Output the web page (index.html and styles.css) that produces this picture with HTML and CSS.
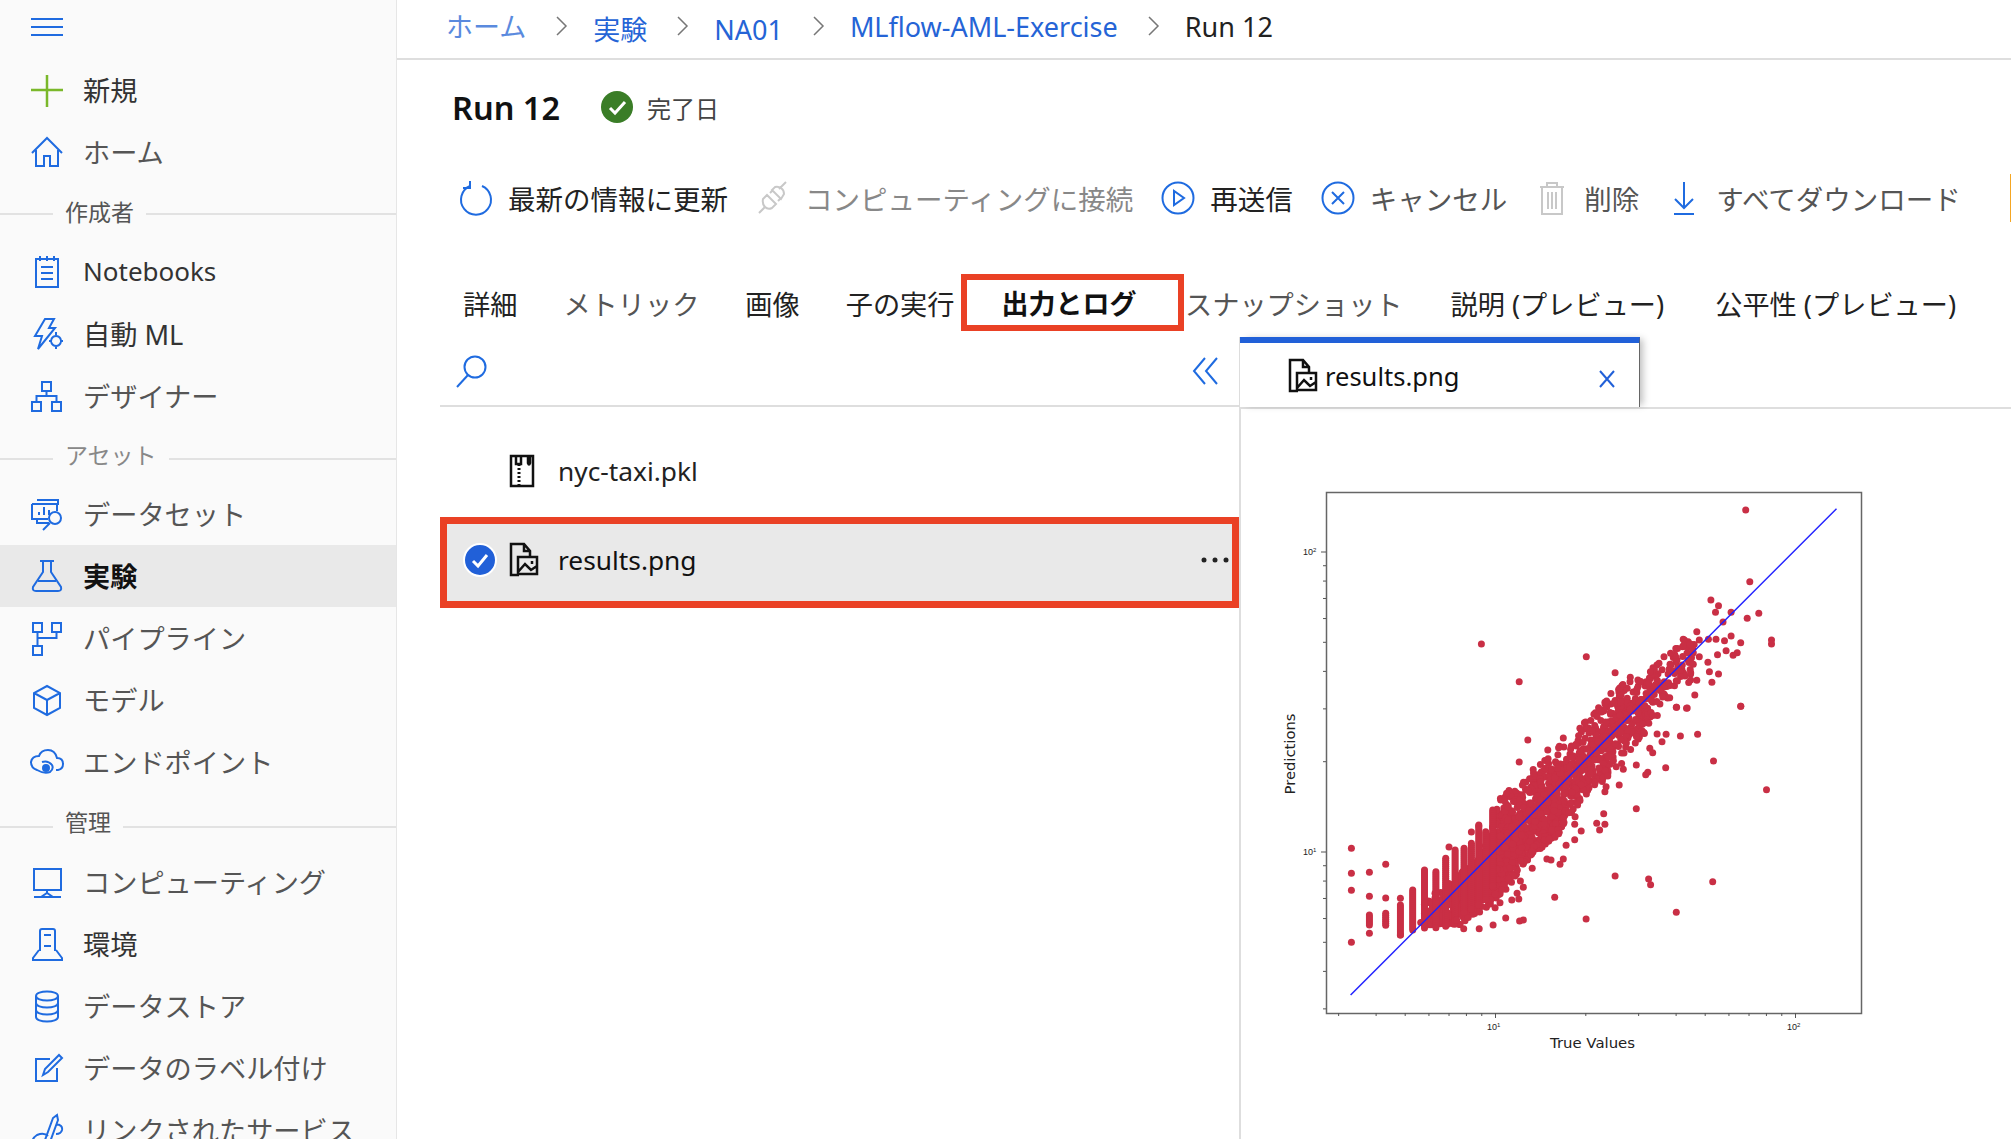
FILE: index.html
```html
<!DOCTYPE html>
<html lang="ja">
  <head>
    <meta charset="UTF-8" />
    <title>Run 12</title>
    <link rel="stylesheet" href="styles.css">
  </head>
  <body>
    <nav class="sidebar">
      <div class="menu-row">
        <svg class="icon" viewBox="0 0 36 36"><path d="M2 10h32M2 18h32M2 26h32" /></svg>
      </div>
      <a class="nav-row strong">
        <svg class="icon green" viewBox="0 0 36 36"><path d="M18 3v32M2 18h32" /></svg>
        <span>新規</span>
      </a>
      <a class="nav-row">
        <svg class="icon" viewBox="0 0 36 36"><path d="M3 19 18 4l15 15M7 16v16h8V22h6v10h8V16" /></svg>
        <span>ホーム</span>
      </a>
      <div class="nav-head head-a"><i></i><span>作成者</span><i></i></div>
      <a class="nav-row strong latin">
        <svg class="icon" viewBox="0 0 36 36"><path d="M7 5h22v28H7zM11 2v5M18 2v5M25 2v5M12 13h12M12 19h12M12 25h12" /></svg>
        <span>Notebooks</span>
      </a>
      <a class="nav-row strong">
        <svg class="icon" viewBox="0 0 36 36"><path d="M16 3h9l-5 9h6L9 33l4-13H6zM27 20a5 5 0 1 0 .1 0zM27 16v3M27 30v3M20 25h3M31 25h3" /></svg>
        <span>自動 ML</span>
      </a>
      <a class="nav-row">
        <svg class="icon" viewBox="0 0 36 36"><path d="M13 4h9v9h-9zM3 24h9v9H3zM23 24h9v9h-9zM17.500 13v5M7.500 24v-6h20v6" /></svg>
        <span>デザイナー</span>
      </a>
      <div class="nav-head head-b"><i></i><span class="faint">アセット</span><i></i></div>
      <a class="nav-row">
        <svg class="icon" viewBox="0 0 36 36"><path d="M8 4h21v5M3 8h25v7M3 8v15h16M8 23v4h12M10 19v-3M15 19v-8M20 19v-5" /><circle cx="26" cy="22" r="6" /><path d="m21 27-7 7" /></svg>
        <span>データセット</span>
      </a>
      <a class="nav-row current">
        <svg class="icon" viewBox="0 0 36 36"><path d="M11 3h14M14 3v11L4 29q-1 4 3 4h22q4 0 3-4L22 14V3M9 23h18" /></svg>
        <span>実験</span>
      </a>
      <a class="nav-row">
        <svg class="icon" viewBox="0 0 36 36"><path d="M4 3h9v9H4zM23 3h9v9h-9zM4 26h9v9H4zM8.500 12v14M8.500 18h19v-6" /></svg>
        <span>パイプライン</span>
      </a>
      <a class="nav-row">
        <svg class="icon" viewBox="0 0 36 36"><path d="m18 4 13 7v15l-13 7-13-7V11zM5 11l13 7 13-7M18 18v15" /></svg>
        <span>モデル</span>
      </a>
      <a class="nav-row">
        <svg class="icon" viewBox="0 0 36 36"><path d="M27 26h2q5-1 5-6 0-6-6-6-2-8-9-8-7 0-9 6-7 0-8 6 0 6 6 8 7 4 13 2 4-3 2-7-4-5-10-3" /><circle cx="17" cy="24" r="3" fill="#1f6be0" /></svg>
        <span>エンドポイント</span>
      </a>
      <div class="nav-head head-c"><i></i><span>管理</span><i></i></div>
      <a class="nav-row">
        <svg class="icon" viewBox="0 0 36 36"><path d="M5 5h27v21H5zM18 26v3M5 33h27M12 33l6-4 6 4" /></svg>
        <span>コンピューティング</span>
      </a>
      <a class="nav-row strong">
        <svg class="icon" viewBox="0 0 36 36"><path d="M11 25V5q0-2 2-2h11q2 0 2 2v20M15 9h7M15 20h7M10 24l-6 8v2h29v-2l-6-8" /></svg>
        <span>環境</span>
      </a>
      <a class="nav-row">
        <svg class="icon" viewBox="0 0 36 36"><path d="M7 8c0-6 22-6 22 0s-22 6-22 0v21c0 6 22 6 22 0V8M7 15c0 6 22 6 22 0M7 22c0 6 22 6 22 0" /></svg>
        <span>データストア</span>
      </a>
      <a class="nav-row">
        <svg class="icon" viewBox="0 0 36 36"><path d="M28 18v13H7V9h14M14 25l2-6L30 5l3 3-14 14z" /></svg>
        <span>データのラベル付け</span>
      </a>
      <a class="nav-row">
        <svg class="icon" viewBox="0 0 36 36"><path d="M4 32q-2-5 4-9 7-3 11 1M16 28l8-22 4-3 1 5-8 22-5 3zM27 12q7 1 6 6-1 4-6 4" /></svg>
        <span>リンクされたサービス</span>
      </a>
    </nav>

    <main class="main">
      <div class="crumbs">
        <a class="crumb thin">ホーム</a>
        <svg class="chev" viewBox="0 0 12 20"><path d="m1 1 9 9-9 9" /></svg>
        <a class="crumb low">実験</a>
        <svg class="chev" viewBox="0 0 12 20"><path d="m1 1 9 9-9 9" /></svg>
        <a class="crumb low">NA01</a>
        <svg class="chev" viewBox="0 0 12 20"><path d="m1 1 9 9-9 9" /></svg>
        <a class="crumb">MLflow-AML-Exercise</a>
        <svg class="chev dark" viewBox="0 0 12 20"><path d="m1 1 9 9-9 9" /></svg>
        <span class="crumb current-crumb">Run 12</span>
      </div>

      <div class="title-row">
        <h1>Run 12</h1>
        <svg class="status" viewBox="0 0 32 32"><circle cx="16" cy="16" r="16" fill="#3a7d27" /><path d="m9 17 5 5 10-11" fill="none" stroke="#fff" stroke-width="3" /></svg>
        <span class="status-text">完了日</span>
      </div>

      <div class="toolbar">
        <button class="tool">
          <svg class="icon" viewBox="0 0 36 36"><path d="M12 6a15 15 0 1 0 12 0M12 1v7H5" /></svg>
          <span>最新の情報に更新</span>
        </button>
        <button class="tool off">
          <svg class="icon grey" viewBox="0 0 36 36"><path d="m12 15 9 9-4 4q-4 2-7-1t-2-8zM17 10l9 9 3-5q0-4-3-6t-6-1zM4 33l6-6M24 9l7-7M15 13l3-3M23 21l3-3" /></svg>
          <span>コンピューティングに接続</span>
        </button>
        <button class="tool">
          <svg class="icon" viewBox="0 0 36 36"><circle cx="18" cy="18" r="15.500" /><path d="M14 11v14l10-7z" /></svg>
          <span>再送信</span>
        </button>
        <button class="tool soft">
          <svg class="icon" viewBox="0 0 36 36"><circle cx="18" cy="18" r="15.500" /><path d="m12 12 12 12M24 12 12 24" /></svg>
          <span>キャンセル</span>
        </button>
        <button class="tool soft">
          <svg class="icon grey" viewBox="0 0 36 36"><path d="M6 7h24M13 7V3h10v4M8 7v27h20V7M14 12v17M18 12v17M22 12v17" /></svg>
          <span>削除</span>
        </button>
        <button class="tool soft">
          <svg class="icon" viewBox="0 0 36 36"><path d="M18 2v26M9 19l9 9 9-9M8 34h20" /></svg>
          <span>すべてダウンロード</span>
        </button>
        <i class="sliver"></i>
      </div>

      <div class="tabs">
        <a class="tab">詳細</a>
        <a class="tab soft">メトリック</a>
        <a class="tab">画像</a>
        <a class="tab">子の実行</a>
        <a class="tab active">出力とログ</a>
        <a class="tab soft">スナップショット</a>
        <a class="tab desc">説明 (プレビュー)</a>
        <a class="tab last">公平性 (プレビュー)</a>
      </div>

      <div class="panes">
        <section class="files">
          <div class="search-row">
            <svg class="icon search" viewBox="0 0 36 36"><circle cx="21" cy="14" r="10.500" /><path d="M14 22 3 34" /></svg>
            <svg class="icon" viewBox="0 0 36 36"><path d="M17 5 6 18l11 13M29 5 18 18l11 13" /></svg>
          </div>
          <div class="file-row">
            <svg class="icon black" viewBox="0 0 36 36"><path d="M7 3h22v30H7zM12 3v8h5V3M24 3v7q1 3 2 0V3" stroke-width="2.500" /><path d="M15 11v21" stroke="#111" stroke-width="3" stroke-dasharray="2 2" /></svg>
            <span>nyc-taxi.pkl</span>
          </div>
          <div class="file-row picked">
            <svg class="tick" viewBox="0 0 34 34"><circle cx="17" cy="17" r="16" fill="#2160d8" stroke="#fff" stroke-width="2" /><path d="m10 18 5 5 9-11" fill="none" stroke="#fff" stroke-width="3" /></svg>
            <svg class="icon black" viewBox="0 0 36 36"><path d="M25 15V9l-6-7H6v31h8M19 2v7h6M13 15h19v17H13zM13 30l7-8 6 6 6-4M27 19v3" stroke-width="2.500" /></svg>
            <span>results.png</span>
            <svg class="dots" viewBox="0 0 28 6"><circle cx="3" cy="3" r="2.500" /><circle cx="14" cy="3" r="2.500" /><circle cx="25" cy="3" r="2.500" /></svg>
          </div>
        </section>
        <section class="viewer">
          <div class="viewer-tabs">
            <div class="viewer-tab">
              <svg class="icon black" viewBox="0 0 36 36"><path d="M25 15V9l-6-7H6v31h8M19 2v7h6M13 15h19v17H13zM13 30l7-8 6 6 6-4M27 19v3" stroke-width="2.500" /></svg>
              <span>results.png</span>
              <svg class="close" viewBox="0 0 20 20"><path d="m3 2 14 16M17 2 3 18" /></svg>
            </div>
          </div>
          <svg id="plot" class="plot" viewBox="1241 409 770 730">
            <rect x="1326.500" y="492.500" width="535" height="521" fill="#fff" stroke="#666" stroke-width="1.500" />
            <g id="ticks" stroke="#555" stroke-width="1"></g>
            <g id="points" fill="#c92f45"></g>
            <path d="M1350.600 995 1836.500 508.700" stroke="#2222ff" stroke-width="1.500" fill="none" />
            <text class="tick-label" x="1303" y="555">10<tspan class="sup" dy="-3">2</tspan></text>
            <text class="tick-label" x="1303" y="855">10<tspan class="sup" dy="-3">1</tspan></text>
            <text class="tick-label" x="1487" y="1030">10<tspan class="sup" dy="-3">1</tspan></text>
            <text class="tick-label" x="1787" y="1030">10<tspan class="sup" dy="-3">2</tspan></text>
            <text class="axis-label" x="1592.500" y="1048" text-anchor="middle" textLength="85" lengthAdjust="spacingAndGlyphs">True Values</text>
            <text class="axis-label" x="0" y="0" text-anchor="middle" textLength="81" lengthAdjust="spacingAndGlyphs" transform="translate(1295 754) rotate(-90)">Predictions</text>
          </svg>
        </section>
      </div>
    </main>
    <script src="plot.js"></script>
  </body>
</html>
```

FILE: styles.css
```css
html,
body {
  height: 100%;
  margin: 0;
  overflow: hidden;
}
body {
  display: flex;
  background: #fff;
  color: #222;
  font-family: "Noto Sans", "Noto Sans CJK JP", sans-serif;
  font-size: 27px;
}
a {
  color: inherit;
  text-decoration: none;
}
i {
  display: block;
}
.icon {
  flex: none;
  width: 36px;
  height: 36px;
  fill: none;
  stroke: #1f6be0;
  stroke-width: 2;
}
.icon.green {
  stroke: #7ab82a;
  stroke-width: 2.5;
}
.icon.grey {
  stroke: #c8c8c8;
}
.icon.black {
  stroke: #111;
}

/* left nav */
.sidebar {
  flex: none;
  width: 397px;
  height: 1139px;
  overflow: hidden;
  box-sizing: border-box;
  background: #fafafa;
  border-right: 1px solid #e6e6e6;
}
.menu-row {
  display: flex;
  align-items: center;
  height: 59px;
  padding-left: 29px;
  box-sizing: border-box;
  padding-bottom: 5px;
}
.nav-row {
  display: flex;
  align-items: center;
  gap: 18px;
  height: 62px;
  padding-left: 29px;
  color: #555;
  font-size: 27.2px;
}
.nav-row span {
  margin-top: -2px;
}
.nav-row.strong {
  color: #333;
}
.nav-row.latin {
  font-size: 26px;
}
.nav-row.current {
  background: #e9e9e9;
  color: #111;
  font-weight: 700;
}
.nav-head {
  display: flex;
  align-items: center;
  color: #555;
  font-size: 23px;
}
.nav-head i {
  flex: 1;
  height: 2px;
  margin-top: 4px;
  background: #e2e2e2;
}
.nav-head i:first-child {
  flex: none;
  width: 53px;
}
.nav-head span {
  padding: 0 12px 2px;
}
.nav-head .faint {
  color: #888;
}
.head-a,
.head-c {
  height: 58px;
}
.head-b {
  height: 56px;
}
.head-b i {
  margin-top: 8px;
}
.head-c i {
  margin-top: 10px;
}

/* right side */
.main {
  flex: 1;
  min-width: 0;
  display: flex;
  flex-direction: column;
}
.crumbs {
  flex: none;
  display: flex;
  align-items: center;
  height: 58px;
  padding-left: 49px;
  border-bottom: 2px solid #dedede;
  color: #2564d6;
  white-space: nowrap;
}
.crumb {
  font-size: 27px;
  line-height: 1;
  margin-top: -6px;
}
.crumb.thin {
  color: #5a8ade;
}
.crumb.low {
  margin-top: 1px;
}
.current-crumb {
  color: #222;
}
.chev {
  flex: none;
  width: 12px;
  height: 20px;
  margin: -6px 25px 0 30px;
  fill: none;
  stroke: #777;
  stroke-width: 1.5;
}
.title-row {
  flex: none;
  display: flex;
  align-items: center;
  box-sizing: border-box;
  height: 98px;
  padding: 0 0 4px 55px;
}
h1 {
  margin: 0;
  color: #111;
  font-size: 32.5px;
  font-weight: 600;
}
.status {
  width: 32px;
  height: 32px;
  margin-left: 41px;
}
.status-text {
  margin-left: 14px;
  color: #444;
  font-size: 24px;
}
.toolbar {
  flex: none;
  display: flex;
  align-items: center;
  gap: 27px;
  height: 80px;
  padding-left: 61px;
}
.tool {
  display: flex;
  align-items: center;
  gap: 14px;
  padding: 0;
  border: none;
  background: none;
  color: #222;
  font: inherit;
  font-size: 27.5px;
  white-space: nowrap;
}
.tool.off {
  color: #888;
}
.tool.soft {
  color: #555;
}
.sliver {
  width: 1px;
  height: 48px;
  margin-left: auto;
  background: #f5a623;
}
.tabs {
  flex: none;
  display: flex;
  align-items: center;
  gap: 46px;
  height: 57px;
  margin-top: 36px;
  padding-left: 66px;
  font-size: 27.2px;
  white-space: nowrap;
}
.tab.soft {
  color: #555;
}
.tab.desc {
  margin-left: 2px;
}
.tab.last {
  margin-left: 5px;
}
.tab.active {
  box-sizing: border-box;
  width: 223px;
  height: 57px;
  margin: 0 -44.500px 0 -40px;
  padding-left: 35px;
  border: 6px solid #ea4125;
  color: #111;
  font-weight: 700;
  font-size: 27px;
  line-height: 47px;
}
.panes {
  flex: 1;
  min-height: 0;
  display: flex;
  margin-top: 6px;
}
.files {
  flex: none;
  width: 799px;
  margin-left: 43px;
  box-sizing: border-box;
}
.search-row {
  display: flex;
  align-items: center;
  justify-content: space-between;
  height: 68px;
  padding: 0 15px 0 14px;
  border-bottom: 2px solid #dedede;
}
.file-row {
  display: flex;
  align-items: center;
  gap: 18px;
  height: 62px;
  margin-top: 33px;
  padding-left: 64px;
  color: #222;
  font-size: 26.3px;
}
.file-row.picked {
  box-sizing: border-box;
  height: 91px;
  margin-top: 15px;
  padding: 0 0 6px 16px;
  gap: 6px;
  border: 7px solid #ea4125;
  background: #e9e9e9;
  color: #111;
}
.file-row.picked span {
  margin-left: 11px;
}
.tick {
  width: 34px;
  height: 34px;
  margin-right: 2px;
}
.dots {
  width: 28px;
  height: 6px;
  margin-left: auto;
  margin-right: 3px;
  fill: #222;
}
.viewer {
  flex: 1;
  min-width: 0;
  display: flex;
  flex-direction: column;
  border-left: 2px solid #dedede;
}
.viewer-tabs {
  flex: none;
  height: 70px;
  border-bottom: 2px solid #dedede;
}
.viewer-tab {
  display: flex;
  align-items: center;
  box-sizing: border-box;
  width: 400px;
  height: 70px;
  margin-left: -1px;
  padding: 2px 0 0 44px;
  gap: 5px;
  border-top: 6px solid #2160d8;
  border-right: 1px solid #666;
  background: #fff;
  box-shadow: 5px 0 7px -2px rgba(0, 0, 0, 0.25);
  font-size: 25.5px;
  color: #111;
}
.close {
  width: 20px;
  height: 20px;
  margin: 6px 22px 0 auto;
  fill: none;
  stroke: #2160d8;
  stroke-width: 2;
}
.plot {
  flex: 1;
  min-height: 0;
  width: 770px;
  display: block;
}
.tick-label {
  font-family: "Liberation Sans", sans-serif;
  font-size: 9px;
  fill: #222;
}
.sup {
  font-size: 6px;
}
.axis-label {
  font-family: "DejaVu Sans", sans-serif;
  font-size: 14px;
  fill: #222;
}
```

FILE: plot.js
```js
var NS = "http://www.w3.org/2000/svg";
var points = document.getElementById("points");
var ticks = document.getElementById("ticks");

var seed = 12345;
function rand() {
  seed = (seed * 1103515245 + 12345) % 2147483648;
  return seed / 2147483648;
}

function dot(x, y) {
  var c = document.createElementNS(NS, "circle");
  c.setAttribute("cx", x.toFixed(1));
  c.setAttribute("cy", y.toFixed(1));
  c.setAttribute("r", 3.5);
  points.appendChild(c);
}

function tick(x1, y1, x2, y2) {
  var l = document.createElementNS(NS, "line");
  l.setAttribute("x1", x1);
  l.setAttribute("y1", y1);
  l.setAttribute("x2", x2);
  l.setAttribute("y2", y2);
  ticks.appendChild(l);
}

// main band: y, left x, right x, points per px of y
var band = [
  [640, 1680, 1696, 1],
  [660, 1660, 1700, 1.5],
  [680, 1625, 1692, 3],
  [700, 1603, 1668, 4],
  [730, 1578, 1650, 5],
  [767, 1535, 1619, 7],
  [800, 1498, 1582, 9],
  [833, 1488, 1560, 9],
  [860, 1478, 1528, 8],
  [900, 1425, 1500, 6],
  [925, 1420, 1460, 4],
];
for (var i = 0; i < band.length - 1; i++) {
  var a = band[i];
  var b = band[i + 1];
  var count = (b[0] - a[0]) * a[3];
  for (var n = 0; n < count; n++) {
    var t = rand();
    var y = a[0] + (b[0] - a[0]) * t;
    var left = a[1] + (b[1] - a[1]) * t;
    var right = a[2] + (b[2] - a[2]) * t;
    // about half uniform, the rest near the middle, so the edges stay speckled
    var u = rand() < 0.5 ? rand() : (rand() + rand()) / 2;
    dot(left + (right - left) * u, y);
  }
}

// low end columns, in the picture values are rounded so they stack up
var columns = [
  [268, 645, 680], [308, 640, 680], [344, 615, 705], [374, 570, 690],
  [403, 510, 685], [431, 515, 685], [455, 475, 680], [478, 450, 660],
  [500, 445, 640], [518, 430, 630], [536, 375, 620], [553, 395, 600],
  [570, 330, 560],
];
columns.forEach(function (c) {
  for (var zy = c[1]; zy <= c[2]; zy += 6) {
    dot(1260 + c[0] / 2.45, 700 + zy / 3);
  }
});

// single points, upper half of the plot
[
  [1042, 570], [1050, 785], [973, 840], [988, 857], [982, 877], [1013, 877],
  [1068, 880], [1045, 895], [997, 906], [518, 972], [726, 1010], [593, 1085],
  [945, 935], [918, 958], [1093, 960], [1093, 972], [1032, 968], [1013, 948],
  [1000, 962], [983, 958], [968, 958], [950, 960], [932, 972], [1003, 992],
  [986, 1004], [1025, 998], [1017, 1006], [950, 1010], [938, 998], [967, 1027],
  [938, 1033], [783, 1058], [970, 1055], [988, 1062], [975, 1087], [945, 1081],
  [941, 1125], [1032, 1159], [926, 1164], [905, 1162], [933, 1058], [880, 1010],
  [893, 1000], [870, 1030], [853, 1055], [833, 1085], [827, 1105], [795, 1125],
].forEach(function (p) {
  dot(1220 + p[0] / 1.982, 320 + p[1] / 3);
});

// single points, lower half of the plot
[
  [1178, 19], [1020, 22], [1045, 25], [1030, 108], [1072, 103], [973, 102],
  [995, 103], [985, 125], [955, 145], [962, 158], [1111, 183], [922, 195],
  [994, 203], [950, 217], [945, 224], [890, 208], [852, 228], [880, 255],
  [848, 260], [845, 275], [1241, 269], [922, 326], [842, 341], [772, 350],
  [825, 370], [845, 373], [771, 373], [832, 390], [787, 393], [771, 419],
  [750, 436], [703, 477], [713, 480], [743, 477], [735, 493], [667, 505],
  [656, 120], [743, 114], [635, 186], [705, 150], [870, 528], [952, 537],
  [957, 554], [1109, 545], [1020, 637], [722, 592], [799, 657], [638, 543],
  [645, 562], [630, 580], [634, 597], [617, 600], [588, 608], [576, 623],
  [576, 582], [602, 654], [645, 660], [636, 663], [571, 675], [537, 686],
  [499, 686], [482, 660], [224, 445], [224, 520], [224, 571], [224, 727],
  [268, 517], [268, 589], [308, 493], [308, 594], [344, 595], [268, 700],
  [344, 705], [463, 441], [518, 396], [536, 378],
].forEach(function (p) {
  dot(1260 + p[0] / 2.45, 700 + p[1] / 3);
});

// log ticks, one decade is 300px on both axes
[3, 4, 5, 6, 7, 8, 9, 10, 20, 30, 40, 50, 60, 70, 80, 90, 100].forEach(function (v) {
  var x = 1495.5 + (Math.log10(v) - 1) * 300;
  var y = 852 - (Math.log10(v) - 1) * 300;
  var size = v === 10 || v === 100 ? 5 : 3;
  tick(x, 1013, x, 1013 + size);
  if (y > 492) tick(1326, y, 1326 - size, y);
});
```
